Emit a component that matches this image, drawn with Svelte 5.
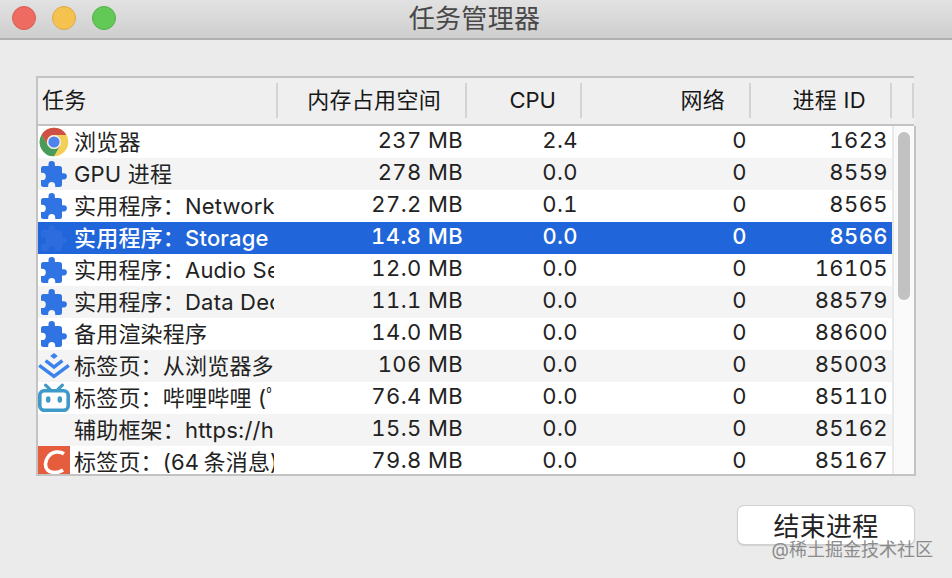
<script lang="ts">
	type Task = { icon: string, name: string, memory: string, cpu: string, network: string, pid: string };

	let tasks: Task[] = [
		{ icon: 'chrome', name: '浏览器', memory: '237 MB', cpu: '2.4', network: '0', pid: '1623' },
		{ icon: 'puzzle', name: 'GPU 进程', memory: '278 MB', cpu: '0.0', network: '0', pid: '8559' },
		{ icon: 'puzzle', name: '实用程序：Network', memory: '27.2 MB', cpu: '0.1', network: '0', pid: '8565' },
		{ icon: 'puzzle', name: '实用程序：Storage', memory: '14.8 MB', cpu: '0.0', network: '0', pid: '8566' },
		{ icon: 'puzzle', name: '实用程序：Audio Se', memory: '12.0 MB', cpu: '0.0', network: '0', pid: '16105' },
		{ icon: 'puzzle', name: '实用程序：Data Dec', memory: '11.1 MB', cpu: '0.0', network: '0', pid: '88579' },
		{ icon: 'puzzle', name: '备用渲染程序', memory: '14.0 MB', cpu: '0.0', network: '0', pid: '88600' },
		{ icon: 'juejin', name: '标签页：从浏览器多', memory: '106 MB', cpu: '0.0', network: '0', pid: '85003' },
		{ icon: 'bilibili', name: '标签页：哔哩哔哩 (ﾟ', memory: '76.4 MB', cpu: '0.0', network: '0', pid: '85110' },
		{ icon: '', name: '辅助框架：https://h', memory: '15.5 MB', cpu: '0.0', network: '0', pid: '85162' },
		{ icon: 'csdn', name: '标签页：(64\u2009条消息)', memory: '79.8 MB', cpu: '0.0', network: '0', pid: '85167' }
	];

	let selected = $state('8566');
</script>

<div class="window" lang="zh-CN">
	<header class="titlebar">
		<div class="lights">
			<span class="close"></span>
			<span class="minimize"></span>
			<span class="zoom"></span>
		</div>
		<h1>任务管理器</h1>
	</header>

	<main>
		<div class="table">
			<div class="head">
				<div class="task-title">任务</div>
				<div>内存占用空间</div>
				<div class="cpu-title">CPU</div>
				<div>网络</div>
				<div>进程 ID</div>
				<div class="corner"></div>
			</div>
			<div class="body">
				<div class="rows">
					{#each tasks as task}
						<!-- svelte-ignore a11y_click_events_have_key_events, a11y_no_static_element_interactions -->
						<div class="row" class:selected={selected === task.pid} onclick={() => { selected = task.pid }}>
							<div class="task">
								<span class="icon">
									{#if task.icon === 'chrome'}
										<svg viewBox="0 0 32 32">
											<circle cx="16" cy="16" r="14.3" fill="#f4cf57" />
											<path d="M3.6 8.8A14.3 14.3 0 0 1 28.4 9H16A7 7 0 0 0 9.9 19.5Z" fill="#cf5045" />
											<path d="M3.6 8.8L9.9 19.5A7 7 0 0 0 22.1 19.5L16 30.3A14.3 14.3 0 0 1 3.6 8.8Z" fill="#479b5b" />
											<circle cx="16" cy="16" r="7" fill="#f2f2f2" />
											<circle cx="16" cy="16" r="5.6" fill="#4e84ec" />
										</svg>
									{:else if task.icon === 'puzzle'}
										<svg viewBox="0 0 32 32">
											<path class="piece" d="M5.5 8H10.5V6.2A3.2 3.2 0 0 1 16.9 6.2V8H21.5Q24 8 24 10.5V15.2H25.8A3.1 3.1 0 0 1 25.8 21.4H24V26.5Q24 29 21.5 29H17.2V27.5A3.5 3.5 0 0 0 10.2 27.5V29H5.5Q3 29 3 26.5V22H4.2A3.6 3.6 0 0 0 4.2 14.8H3V10.5Q3 8 5.5 8Z" />
										</svg>
									{:else if task.icon === 'juejin'}
										<svg viewBox="0 0 32 32">
											<path d="M16 3L19.8 6L16 9L12.2 6Z" fill="#3b82ed" />
											<path d="M7.6 10.6L16 17.2L24.4 10.6M1.2 15.4L16 26.4L30.8 15.4" fill="none" stroke="#3b82ed" stroke-width="3.4" />
										</svg>
									{:else if task.icon === 'bilibili'}
										<svg viewBox="0 0 32 32">
											<path d="M7.6 3.2L12 7.4M24.4 3.2L20 7.4" stroke="#3e9ac8" stroke-width="3.2" stroke-linecap="round" />
											<rect x="1.8" y="8.8" width="28.4" height="19.4" rx="4.5" fill="#fff" stroke="#3e9ac8" stroke-width="3.6" />
											<ellipse cx="10.2" cy="17.5" rx="2.3" ry="3.2" fill="#3e9ac8" />
											<ellipse cx="21.8" cy="17.5" rx="2.3" ry="3.2" fill="#3e9ac8" />
										</svg>
									{:else if task.icon === 'csdn'}
										<svg viewBox="0 0 32 32">
											<rect width="32" height="32" fill="#e55d3d" />
											<path d="M26 7.8C21.5 4.8 14.5 5.5 10.8 9.8C7 14.4 6.4 20.8 9.5 24C12.8 27.3 20 27.5 25 24" fill="none" stroke="#fff" stroke-width="3.6" />
										</svg>
									{/if}
								</span>
								<span class="name">{task.name}</span>
							</div>
							<div class="num">{task.memory}</div>
							<div class="num">{task.cpu}</div>
							<div class="num">{task.network}</div>
							<div class="num">{task.pid}</div>
						</div>
					{/each}
				</div>
				<div class="scrollbar"><div class="thumb"></div></div>
			</div>
		</div>

		<div class="actions">
			<button>结束进程</button>
			<span class="watermark">@稀土掘金技术社区</span>
		</div>
	</main>
</div>

<style>
:global(body) {
	margin: 0;
}

.window {
	width: 952px;
	height: 578px;
	overflow: hidden;
	background: #ebebeb;
	color: #222;
	font-family: Inter, "Noto Sans CJK SC", sans-serif;
	font-size: 22px;
}

.titlebar {
	display: grid;
	grid-template-columns: 1fr auto 1fr;
	height: 40px;
	box-sizing: border-box;
	background: linear-gradient(#e2e2e2, #cecece);
	border-bottom: 2px solid #b0b0b0;
}

.lights {
	display: flex;
	gap: 16px;
	padding: 6px 0 0 12px;
}

.lights span {
	width: 24px;
	height: 24px;
	box-sizing: border-box;
	border-radius: 50%;
	border: 1px solid;
}

.lights .close { background: #ed6b60; border-color: #d75d53; }
.lights .minimize { background: #f5c250; border-color: #dcab43; }
.lights .zoom { background: #62c856; border-color: #53b249; }

h1 {
	margin: 0;
	padding-right: 3px;
	font-size: 26px;
	line-height: 38px;
	font-weight: 400;
	letter-spacing: 0.3px;
	color: #484848;
}

main {
	padding: 36px 36px 0;
}

.table {
	width: 880px;
	height: 400px;
	box-sizing: border-box;
	border-left: 2px solid #c3c3c3;
}

.head, .row {
	display: grid;
	grid-template-columns: 240px 189px 115px 169px 141px;
}

.head {
	grid-template-columns: 240px 189px 115px 169px 141px 22px;
	width: 876px;
	height: 50px;
	box-sizing: border-box;
	padding: 5px 0 6px;
	background: #efefef;
	border-top: 2px solid #c3c3c3;
	border-bottom: 2px solid #c3c3c3;
	color: #171717;
}

.head div {
	box-sizing: border-box;
	border-right: 2px solid #d4d4d4;
	padding-right: 24px;
	text-align: right;
	line-height: 35px;
	letter-spacing: 0.3px;
}

.head .task-title {
	padding-left: 4px;
	text-align: left;
}

.head .cpu-title {
	letter-spacing: 0;
}

.head .corner {
	padding: 0;
}

.body {
	display: flex;
	height: 350px;
	width: 878px;
	box-sizing: border-box;
	border-right: 2px solid #c3c3c3;
	border-bottom: 2px solid #c3c3c3;
}

.rows {
	width: 854px;
	overflow: hidden;
	background: #fff;
}

.row {
	height: 32px;
}

.row:nth-child(even) {
	background: #f4f4f4;
}

.row.selected {
	background: #2065d9;
	color: #fff;
	font-weight: 500;
}

.task {
	display: flex;
	width: 236px;
	overflow: hidden;
	white-space: nowrap;
}

.icon {
	flex: none;
	width: 32px;
	height: 32px;
	margin-right: 4px;
}

.icon svg {
	display: block;
	width: 32px;
	height: 32px;
}

.piece {
	fill: #3074e4;
}

.selected .piece {
	fill: #2c6cdf;
}

.name {
	line-height: 33px;
	letter-spacing: 0.2px;
}

.num {
	padding-right: 4px;
	text-align: right;
	line-height: 28px;
	letter-spacing: 0.4px;
	font-variant-numeric: tabular-nums;
}

.scrollbar {
	width: 22px;
	box-sizing: border-box;
	padding: 6px 4px 0;
	background: #fafafa;
	border-left: 2px solid #e9e9e9;
}

.thumb {
	width: 12px;
	height: 168px;
	border-radius: 6px;
	background: #c2c2c2;
}

.actions {
	position: relative;
	display: flex;
	justify-content: flex-end;
	padding: 30px 2px 0 0;
}

button {
	width: 176px;
	height: 38px;
	padding: 3px 0 0;
	border: 0;
	border-radius: 6px;
	background: #fff;
	box-shadow: 0 0 0 1px #cfcfcf, 0 1px 2px #999;
	color: #222;
	font-family: inherit;
	font-size: 26px;
	line-height: 35px;
	letter-spacing: 0.3px;
}

.watermark {
	position: absolute;
	right: -17px;
	top: 61px;
	color: #8b8b8b;
	font-size: 18px;
	line-height: 26px;
	white-space: nowrap;
}
</style>
